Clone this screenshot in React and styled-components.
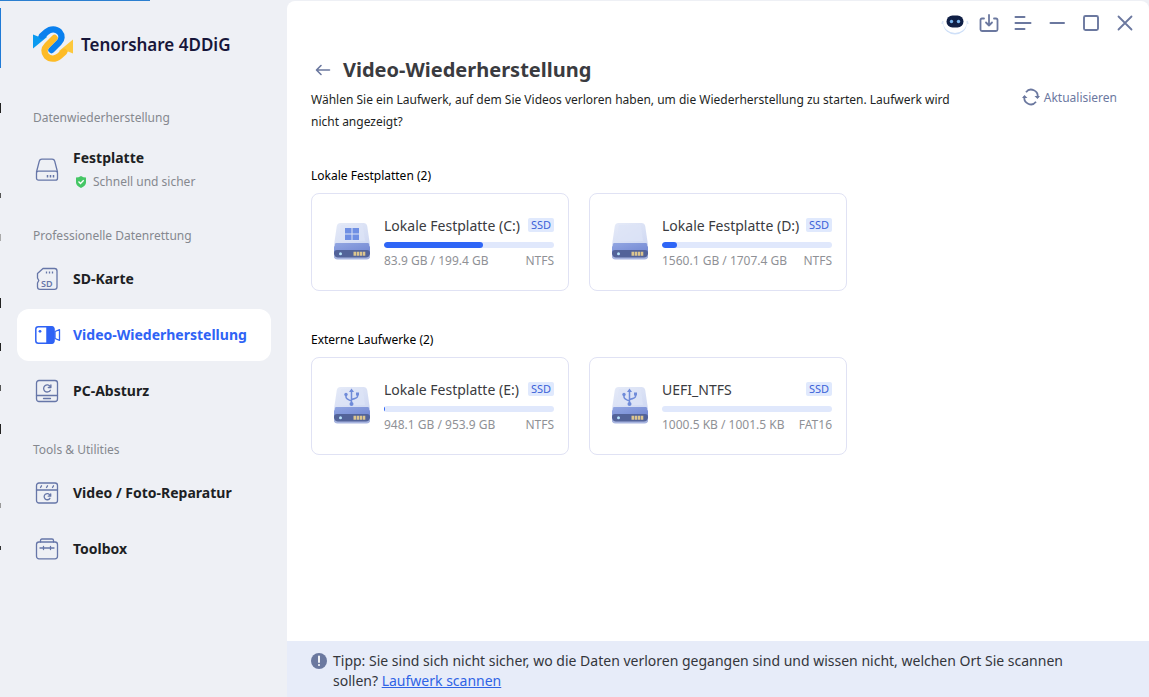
import React from 'react'
import styled, { createGlobalStyle } from 'styled-components'

const GlobalStyle = createGlobalStyle`
    * {
        box-sizing: border-box;
    }
    body {
        margin: 0;
        font-family: 'Noto Sans', 'Open Sans', sans-serif;
        font-size: 12px;
        color: #1d1f24;
        background: #eef0f5;
    }
    button {
        font: inherit;
        color: inherit;
        border: 0;
        padding: 0;
        background: none;
        cursor: pointer;
    }
`

// slivers of the windows behind the app, visible along the top and left edges
const Window = styled.div`
    display: grid;
    grid-template-columns: 287px 1fr;
    min-height: 100vh;
    padding-top: 1px;
    background:
        linear-gradient(#2b7fd0, #2b7fd0) 0 0 / 150px 1px no-repeat,
        linear-gradient(#1f7ad6, #1f7ad6) 0 8px / 1px 60px no-repeat,
        linear-gradient(#222, #222) 0 103px / 1px 10px no-repeat,
        linear-gradient(#555, #555) 0 193px / 1px 5px no-repeat,
        linear-gradient(#aaa, #aaa) 0 234px / 1px 7px no-repeat,
        linear-gradient(#222, #222) 0 298px / 1px 10px no-repeat,
        linear-gradient(#222, #222) 0 343px / 1px 8px no-repeat,
        linear-gradient(#555, #555) 0 385px / 1px 6px no-repeat,
        linear-gradient(#222, #222) 0 424px / 1px 10px no-repeat,
        linear-gradient(#999, #999) 0 503px / 1px 5px no-repeat,
        linear-gradient(#333, #333) 0 546px / 1px 4px no-repeat,
        #eef0f5;
`

const Sidebar = styled.nav`
    padding: 25px 16px 24px 17px;
`
const Brand = styled.div`
    display: flex;
    align-items: center;
    gap: 8px;
    height: 36px;
    padding-left: 16px;
    margin-bottom: 45px;
    font-size: 17px;
    font-weight: 600;
    color: #17163a;
`
const MenuGroup = styled.section`
    margin-bottom: 22px;
`
const MenuLabel = styled.h2`
    margin: 0 0 6px;
    padding-left: 16px;
    font-size: 12px;
    font-weight: 400;
    line-height: 22px;
    color: #85888f;
`
const MenuList = styled.div`
    display: flex;
    flex-direction: column;
    gap: 4px;
`
const MenuItem = styled.button`
    display: flex;
    align-items: center;
    gap: 12px;
    width: 100%;
    height: ${(props) => (props.$tall ? '68px' : '52px')};
    padding: ${(props) => (props.$tall ? '2px 18px 0' : '0 18px')};
    border-radius: 12px;
    text-align: left;
    white-space: nowrap;
    color: ${(props) => (props.$active ? '#2f63f5' : '#1d1f24')};
    background: ${(props) => (props.$active ? '#fff' : 'transparent')};

    svg {
        flex: none;
    }
`
const MenuIcon = styled.span`
    display: flex;
    flex: none;
    width: 26px;
`
const MenuName = styled.span`
    display: block;
    font-size: 14px;
    font-weight: 700;
    line-height: 24px;
`
const MenuHint = styled.span`
    display: flex;
    align-items: center;
    gap: 6px;
    padding-left: 2px;
    line-height: 24px;
    color: #85888f;
`

const Main = styled.main`
    display: flex;
    flex-direction: column;
    background: #fff;
    border-radius: 8px 8px 0 0;
`
const TitleBar = styled.header`
    display: flex;
    justify-content: flex-end;
    gap: 10px;
    height: 45px;
    padding: 10px 12px 0 0;
`
const BarButton = styled.button`
    display: flex;
    align-items: center;
    justify-content: center;
    width: 24px;
    height: 24px;
    color: #6b789f;

    svg {
        flex: none;
    }
`
const Content = styled.div`
    flex: 1;
    padding: 10px 32px 24px 24px;
`
const Heading = styled.div`
    display: flex;
    align-items: center;
    gap: 8px;
    height: 28px;
`
const BackButton = styled(BarButton)`
    flex: none;
`
const Title = styled.h1`
    margin: 0;
    font-size: 20px;
    font-weight: 700;
    line-height: 28px;
    color: #3a3b40;
`
const Intro = styled.div`
    display: flex;
    align-items: flex-start;
    justify-content: space-between;
    gap: 32px;
    margin: 5px 0 32px;
`
const Description = styled.p`
    max-width: 660px;
    margin: 0;
    line-height: 22px;
`
const Refresh = styled.button`
    display: flex;
    align-items: center;
    gap: 4px;
    flex: none;
    height: 16px;
    color: #6b789f;
`
const DriveGroup = styled.section`
    margin-bottom: 38px;
`
const GroupLabel = styled.h2`
    margin: 0 0 6px;
    font-size: 12px;
    font-weight: 400;
    line-height: 22px;
    color: #000;
`
const DriveList = styled.div`
    display: flex;
    flex-wrap: wrap;
    gap: 20px;
`
const Card = styled.button`
    display: flex;
    align-items: flex-start;
    gap: 13px;
    width: 258px;
    height: 98px;
    padding: 21px 14px 0 21px;
    border: 1px solid #e0e2f4;
    border-radius: 8px;
    background: #fff;
    text-align: left;
    white-space: nowrap;
`
const CardBody = styled.span`
    display: flex;
    flex-direction: column;
    flex: 1;
    min-width: 0;
`
const CardRow = styled.span`
    display: flex;
    align-items: center;
    justify-content: space-between;
    height: 20px;
    color: #8f9196;
`
const DriveName = styled.span`
    font-size: 14px;
    color: #3a3b40;
`
const Badge = styled.span`
    padding: 0 3px;
    border-radius: 2px;
    font-size: 11px;
    line-height: 14px;
    color: #3a62d8;
    background: #e0e9fd;
`
const Track = styled.span`
    display: block;
    height: 6px;
    margin: 7px 0 2px;
    border-radius: 3px;
    overflow: hidden;
    background: #e0e8fc;
`
const Fill = styled.span`
    display: block;
    height: 100%;
    border-radius: 3px;
    background: #2f66f6;
`
const Tip = styled.footer`
    display: flex;
    align-items: flex-start;
    gap: 6px;
    padding: 10px 32px 6px 24px;
    font-size: 14px;
    line-height: 20px;
    color: #34363c;
    background: #e7ecf9;

    svg {
        flex: none;
        margin-top: 2px;
    }
    p {
        max-width: 760px;
        margin: 0;
    }
    a {
        color: #2f63e5;
    }
`

// ---------------------------------------------------------------- icons

const LogoIcon = () => (
    <svg width="40" height="36" viewBox="0 0 40 36" fill="none" strokeWidth="6.400" strokeLinecap="round">
        <path d="M0 8.500L5 10.500L10 6.500L14 11L0 22.500Z" fill="#0a9af0" />
        <path d="M9 10L13.500 6C17.500 2.500 23 2.500 26.500 6C29.500 9.500 29 13.500 26 16.500L18.500 24" stroke="#0a80ee" />
        <path d="M40 27.500L35 25.500L30 29.500L26 25L40 13.500Z" fill="#fdc83c" />
        <path d="M31 26L26.500 30C22.500 33.500 17 33.500 13.500 30C10.500 26.500 11 22.500 14 19.500L21.500 12" stroke="#fdbb26" />
    </svg>
)

const Stroke = ({ size = 24, width = 1.5, children, color = '#6676a8' }) => (
    <svg width={size} height={size} viewBox="0 0 24 24" fill="none" stroke={color}
        strokeWidth={width} strokeLinecap="round" strokeLinejoin="round">
        {children}
    </svg>
)

const DiskIcon = () => (
    <Stroke width={1.3}>
        <path d="M1.500 14L4.300 3.200Q4.800 1.200 6.800 1.200H17.200Q19.200 1.200 19.700 3.200L22.500 14" />
        <rect x="1.500" y="13.200" width="21" height="9" rx="2" />
        <path d="M12.500 17v2.500M15.500 17v2.500M18.500 17v2.500" strokeWidth="1.500" strokeLinecap="butt" />
    </Stroke>
)
const SdIcon = () => (
    <Stroke width={1.3}>
        <path d="M8 1.500H19.500Q22 1.500 22 4V20Q22 22.300 19.500 22.300H5Q2.500 22.300 2.500 20V16L3.800 13.500L2.500 11V6.500Z" />
        <path d="M11.500 4.500v2M14.500 4.500v2M17.500 4.500v2" strokeLinecap="butt" />
        <text x="6" y="19.500" fontSize="9" fontWeight="600" fill="#6676a8" stroke="none">SD</text>
    </Stroke>
)
const VideoIcon = () => (
    <svg width="26" height="24" viewBox="0 0 26 24" fill="none" stroke="#2f63f5" strokeWidth="1.500" strokeLinejoin="round">
        <rect x=".8" y="3.800" width="18" height="16.400" rx="2.500" />
        <path d="M12 4h4.500q2.300 0 2.300 2.300v11.400q0 2.300-2.300 2.300H12z" fill="#2f63f5" />
        <path d="M20 8.500l4.500-1.800v10.600l-4.500-1.800z" strokeWidth="1.300" />
        <circle cx="5" cy="8.300" r="1.400" fill="#2f63f5" stroke="none" />
    </svg>
)
const CrashIcon = () => (
    <Stroke width={1.3}>
        <rect x="1.500" y="1.500" width="21" height="21" rx="2.500" />
        <path d="M1.500 16.500h21M8.500 19.500h7" />
        <path d="M15.300 11.300A3.600 3.600 0 1 1 15.300 7.500M15.900 5.800V8.500H13.300" />
    </Stroke>
)
const RepairIcon = () => (
    <Stroke width={1.3}>
        <rect x="1.500" y="2" width="21" height="20" rx="2.500" />
        <path d="M1.500 9h21M6.500 4.800L5.500 6.500M12.500 4.800L11.500 6.500M18.500 4.800L17.500 6.500" />
        <path d="M14.900 17.300A3.100 3.100 0 1 1 15 14.200M15.700 12.800V15.200H13.300" />
    </Stroke>
)
const ToolboxIcon = () => (
    <Stroke width={1.3}>
        <path d="M5.500 5V3.500Q5.500 2 7 2H17Q18.500 2 18.500 3.500V5" />
        <rect x="1.500" y="5" width="21" height="16.800" rx="2.500" />
        <path d="M5 11H19M8.500 9.500v3M15.500 9.500v3" />
    </Stroke>
)
const ShieldIcon = () => (
    <svg width="12" height="12" viewBox="0 0 12 12">
        <path d="M1 1.500Q3.500 1.500 6 0Q8.500 1.500 11 1.500V6.500Q11 9.500 6 12Q1 9.500 1 6.500Z" fill="#45c665" />
        <path d="M3.500 5.500L5.500 7.500L8.700 4.300" fill="none" stroke="#fff" strokeWidth="1.300" />
    </svg>
)
const RobotIcon = () => (
    <svg width="28" height="24" viewBox="0 0 28 24">
        <ellipse cx="14" cy="13.500" rx="11.500" ry="10" fill="#cfe0f8" />
        <ellipse cx="14" cy="12" rx="11.500" ry="10" fill="#fff" />
        <path d="M2 10l-1 3M26 10l1 3" stroke="#dbe6f6" strokeWidth="1.500" />
        <rect x="5.500" y="4.500" width="17" height="12" rx="6" fill="#101f45" />
        <circle cx="10.500" cy="10.500" r="1.700" fill="#79b5ef" />
        <circle cx="17.500" cy="10.500" r="1.700" fill="#79b5ef" />
    </svg>
)
const DownloadIcon = () => (
    <Stroke color="currentColor" width={1.8}>
        <path d="M7 7.500H5Q3.500 7.500 3.500 9V18.500Q3.500 20 5 20H19Q20.500 20 20.500 18.500V9Q20.500 7.500 19 7.500H17M12 4V14.500M9 11.500L12 14.500L15 11.500" />
    </Stroke>
)
const ListIcon = () => (
    <Stroke color="currentColor" width={2}>
        <path d="M4.500 6H13.500M4.500 12H19.500M4.500 18H13.500" />
    </Stroke>
)
const MinimizeIcon = () => (
    <Stroke color="currentColor" width={2}><path d="M5.500 12H19" /></Stroke>
)
const MaximizeIcon = () => (
    <Stroke color="currentColor" width={1.9}><rect x="5" y="5" width="14" height="14" rx="1.500" /></Stroke>
)
const CloseIcon = () => (
    <Stroke color="currentColor" width={1.8}><path d="M5.500 5.500L18.500 18.500M18.500 5.500L5.500 18.500" /></Stroke>
)
const BackIcon = () => (
    <Stroke color="currentColor" width={1.6}><path d="M18.500 12H6M10 7.500L5.500 12L10 16.500" /></Stroke>
)
const RefreshIcon = () => (
    <svg width="18" height="18" viewBox="0 0 18 18" fill="none" stroke="currentColor" strokeWidth="1.800">
        <path d="M4 4.200A6.500 6.500 0 0 1 15.500 9.500M14 13.800A6.500 6.500 0 0 1 2.500 8.500" />
        <path d="M12.500 8L15.500 11L18 8ZM0 10L2.500 7L5.500 10Z" fill="currentColor" stroke="none" />
    </svg>
)
const AlertIcon = () => (
    <svg width="16" height="16" viewBox="0 0 16 16">
        <circle cx="8" cy="8" r="8" fill="#6b789f" />
        <path d="M8 3.500V9" stroke="#fff" strokeWidth="1.800" strokeLinecap="round" />
        <circle cx="8" cy="12" r="1" fill="#fff" />
    </svg>
)

const DriveIcon = ({ kind }) => (
    <svg width="38" height="54" viewBox="0 0 38 54">
        <defs>
            <linearGradient id="driveTop" x1="0" y1="0" x2="1" y2="1">
                <stop offset="0" stopColor="#e6ebf8" />
                <stop offset="1" stopColor="#cfd8f2" />
            </linearGradient>
            <linearGradient id="driveSide" x1="0" y1="0" x2="1" y2="1">
                <stop offset="0" stopColor="#92a6e2" />
                <stop offset="1" stopColor="#7287d2" />
            </linearGradient>
        </defs>
        <path d="M3.800 11Q4.500 8 7.500 8H30.500Q33.500 8 34.200 11L37 30H1Z" fill="url(#driveTop)" />
        <path d="M8 10H30L32 26H6Z" fill="#dde4f6" opacity=".7" />
        <path d="M2.500 28H35.500L37 32V38H1V32Z" fill="url(#driveSide)" />
        <rect x="1" y="35" width="36" height="8.500" rx="3" fill="#536399" />
        <path d="M1 39V41Q1 44.500 4.500 44.500H33.500Q37 44.500 37 41V39Q36 42.500 33 42.500H5Q2 42.500 1 39Z" fill="#a7b4df" />
        <circle cx="7.500" cy="38.800" r="1.500" fill="#b8e4fb" />
        <path d="M20.500 38.800H32.500" stroke="#dcc58e" strokeWidth="4" strokeDasharray="2.500 .6" />
        {kind === 'windows' && (
            <path d="M12 13h6.500v5.500H12zM19.500 13H26v5.500h-6.500zM12 19.500h6.500V25H12zM19.500 19.500H26V25h-6.500z" fill="#6f8fe3" />
        )}
        {kind === 'usb' && (
            <g stroke="#6f8bd9" strokeWidth="1.500" fill="none">
                <path d="M18.500 11V25M13 16V18Q13 20 18.500 22M24.500 15V17.500Q24.500 19 18.500 20.500" />
                <path d="M16 13L18.500 9.500L21 13Z" fill="#6f8bd9" stroke="none" />
                <circle cx="13" cy="15.500" r="1.700" fill="#6f8bd9" stroke="none" />
                <rect x="23" y="13.500" width="3" height="3" fill="#6f8bd9" stroke="none" />
                <circle cx="18.500" cy="25" r="2" fill="#6f8bd9" stroke="none" />
            </g>
        )}
    </svg>
)

// ---------------------------------------------------------------- data

const menu = [
    {
        label: 'Datenwiederherstellung',
        items: [{ name: 'Festplatte', hint: 'Schnell und sicher', icon: <DiskIcon /> }],
    },
    {
        label: 'Professionelle Datenrettung',
        items: [
            { name: 'SD-Karte', icon: <SdIcon /> },
            { name: 'Video-Wiederherstellung', icon: <VideoIcon />, active: true },
            { name: 'PC-Absturz', icon: <CrashIcon /> },
        ],
    },
    {
        label: 'Tools & Utilities',
        items: [
            { name: 'Video / Foto-Reparatur', icon: <RepairIcon /> },
            { name: 'Toolbox', icon: <ToolboxIcon /> },
        ],
    },
]

const driveGroups = [
    {
        label: 'Lokale Festplatten (2)',
        drives: [
            { name: 'Lokale Festplatte (C:)', size: '83.9 GB / 199.4 GB', format: 'NTFS', used: 58, kind: 'windows' },
            { name: 'Lokale Festplatte (D:)', size: '1560.1 GB / 1707.4 GB', format: 'NTFS', used: 9 },
        ],
    },
    {
        label: 'Externe Laufwerke (2)',
        drives: [
            { name: 'Lokale Festplatte (E:)', size: '948.1 GB / 953.9 GB', format: 'NTFS', used: 0.6, kind: 'usb' },
            { name: 'UEFI_NTFS', size: '1000.5 KB / 1001.5 KB', format: 'FAT16', used: 0, kind: 'usb' },
        ],
    },
]

// ---------------------------------------------------------------- page

function DriveCard({ drive }) {
    return (
        <Card>
            <DriveIcon kind={drive.kind} />
            <CardBody>
                <CardRow>
                    <DriveName>{drive.name}</DriveName>
                    <Badge>SSD</Badge>
                </CardRow>
                <Track>
                    <Fill style={{ width: `${drive.used}%` }} />
                </Track>
                <CardRow>
                    <span>{drive.size}</span>
                    <span>{drive.format}</span>
                </CardRow>
            </CardBody>
        </Card>
    )
}

function App() {
    const menuGroups = menu.map((group) => (
        <MenuGroup key={group.label}>
            <MenuLabel>{group.label}</MenuLabel>
            <MenuList>
                {group.items.map((item) => (
                    <MenuItem key={item.name} $active={item.active} $tall={!!item.hint}>
                        <MenuIcon>{item.icon}</MenuIcon>
                        <span>
                            <MenuName>{item.name}</MenuName>
                            {item.hint && <MenuHint><ShieldIcon />{item.hint}</MenuHint>}
                        </span>
                    </MenuItem>
                ))}
            </MenuList>
        </MenuGroup>
    ))

    return (
        <Window>
            <GlobalStyle />
            <Sidebar>
                <Brand><LogoIcon />Tenorshare 4DDiG</Brand>
                {menuGroups}
            </Sidebar>
            <Main>
                <TitleBar>
                    <BarButton aria-label="Assistent"><RobotIcon /></BarButton>
                    <BarButton aria-label="Importieren"><DownloadIcon /></BarButton>
                    <BarButton aria-label="Menü"><ListIcon /></BarButton>
                    <BarButton aria-label="Minimieren"><MinimizeIcon /></BarButton>
                    <BarButton aria-label="Maximieren"><MaximizeIcon /></BarButton>
                    <BarButton aria-label="Schließen"><CloseIcon /></BarButton>
                </TitleBar>
                <Content>
                    <Heading>
                        <BackButton aria-label="Zurück"><BackIcon /></BackButton>
                        <Title>Video-Wiederherstellung</Title>
                    </Heading>
                    <Intro>
                        <Description>
                            Wählen Sie ein Laufwerk, auf dem Sie Videos verloren haben, um die Wiederherstellung zu starten. Laufwerk wird nicht angezeigt?
                        </Description>
                        <Refresh><RefreshIcon />Aktualisieren</Refresh>
                    </Intro>
                    {driveGroups.map((group) => (
                        <DriveGroup key={group.label}>
                            <GroupLabel>{group.label}</GroupLabel>
                            <DriveList>
                                {group.drives.map((drive) => <DriveCard key={drive.name} drive={drive} />)}
                            </DriveList>
                        </DriveGroup>
                    ))}
                </Content>
                <Tip>
                    <AlertIcon />
                    <p>
                        Tipp: Sie sind sich nicht sicher, wo die Daten verloren gegangen sind und wissen nicht, welchen Ort Sie scannen sollen? <a href="#scan">Laufwerk scannen</a>
                    </p>
                </Tip>
            </Main>
        </Window>
    )
}

export default App
